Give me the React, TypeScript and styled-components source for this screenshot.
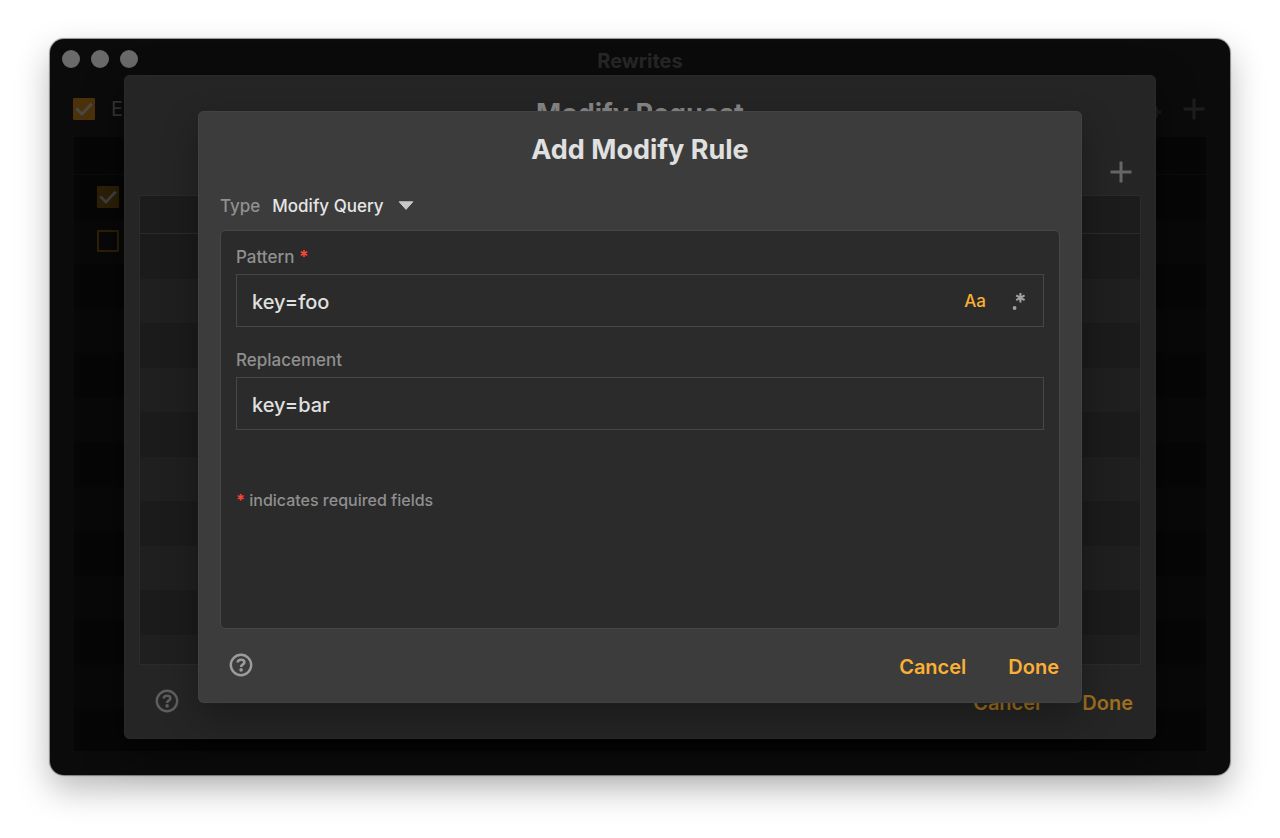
import React, { useState } from "react";
import styled, { createGlobalStyle } from "styled-components";

const GlobalStyle = createGlobalStyle`
  *, *::before, *::after { box-sizing: border-box; }
  html, body, #root { height: 100%; }
  body {
    margin: 0;
    background: #ffffff;
    color: #e0e0e0;
    font-family: Inter, "Liberation Sans", sans-serif;
    font-size: 18px;
  }
  button, input, select { font: inherit; }
`;

const Desktop = styled.div`
  min-height: 100%;
  display: flex;
  padding: 39px 50px 63px;
`;

const Window = styled.div`
  flex: 1;
  display: grid;
  position: relative;
  border-radius: 14px;
  background: #0b0b0b;
  box-shadow: 0 0 1px 1px rgba(0, 0, 0, 0.4), 0 14px 34px rgba(0, 0, 0, 0.28);
`;

const Backdrop = styled.main`
  grid-area: 1 / 1;
  display: flex;
  flex-direction: column;
  padding: 0 24px 24px;
  border-radius: 14px;
  overflow: hidden;
`;

const TitleBar = styled.header`
  display: grid;
  grid-template-columns: 1fr auto 1fr;
  align-items: center;
  height: 44px;
  margin: 0 -12px;
`;

const Lights = styled.div`
  display: flex;
  gap: 11px;
  padding-bottom: 4px;
`;

const Light = styled.span`
  width: 18px;
  height: 18px;
  border-radius: 50%;
  background: #6a6a6a;
`;

const WindowTitle = styled.h1`
  margin: 0;
  font-size: 20px;
  line-height: 24px;
  font-weight: 700;
  color: #272727;
`;

const Toolbar = styled.div`
  display: flex;
  align-items: center;
  gap: 22px;
  height: 54px;
  margin: 0 1px 0 -1px;
  padding-bottom: 3px;
`;

const ToolbarLabel = styled.label`
  display: flex;
  align-items: center;
  gap: 16px;
  margin-right: auto;
  font-size: 20px;
  color: #363636;
`;

const Check = styled.input<{ $tint: string }>`
  appearance: none;
  width: 22px;
  height: 22px;
  margin: 0;
  border: 2px solid ${(p) => p.$tint};
  border-radius: 1px;
  background: transparent;

  &:checked {
    background: ${(p) => p.$tint};
  }
`;

const CheckBox = styled.span`
  display: grid;
  width: 22px;
  height: 22px;

  > * { grid-area: 1 / 1; }
  > svg { z-index: 1; pointer-events: none; }
`;

const IconButton = styled.button<{ $color: string }>`
  display: flex;
  padding: 0;
  border: 0;
  background: none;
  color: ${(p) => p.$color};
  cursor: pointer;
`;

const TargetButton = styled(IconButton)`
  padding-top: 6px;
`;

const RuleList = styled.div`
  flex: 1;
  display: flex;
  flex-direction: column;
  background: #060606;
`;

const ListHead = styled.div<{ $line: string; $height: number }>`
  flex: none;
  height: ${(p) => p.$height}px;
  border-bottom: 1px solid ${(p) => p.$line};
`;

const ListRows = styled.div<{ $a: string; $b: string }>`
  flex: 1;
  background: repeating-linear-gradient(
    ${(p) => p.$a} 0 45px,
    ${(p) => p.$b} 45px 89px
  );
`;

const ListRow = styled.div`
  display: flex;
  align-items: center;
  height: 44px;
  padding-left: 23px;
`;

const Sheet = styled.section<{ $bg: string; $edge: string; $shadow: number }>`
  grid-area: 1 / 1;
  display: grid;
  position: relative;
  margin: 36px 74px;
  border-radius: 6px;
  background: ${(p) => p.$bg};
  box-shadow: inset 0 0 0 1px ${(p) => p.$edge},
    0 14px 36px rgba(0, 0, 0, ${(p) => p.$shadow});
`;

const SheetBody = styled.div<{ $side: number }>`
  grid-area: 1 / 1;
  display: flex;
  flex-direction: column;
  min-width: 0;
  padding: 21px ${(p) => p.$side}px 0;
`;

const SheetTitle = styled.h2<{ $color: string }>`
  margin: 0;
  font-size: 27px;
  line-height: 36px;
  font-weight: 700;
  text-align: center;
  color: ${(p) => p.$color};
`;

const SheetTools = styled.div`
  display: flex;
  align-items: center;
  justify-content: flex-end;
  height: 63px;
  padding: 17px 9px 0;
`;

const RuleTable = styled.div`
  flex: 1;
  display: flex;
  flex-direction: column;
  border: 1px solid #2b2b2b;
  background: #1c1c1c;
`;

const Footer = styled.footer<{ $inset: number }>`
  display: flex;
  align-items: center;
  gap: 42px;
  height: 74px;
  padding: 2px ${(p) => p.$inset}px 0;
`;

const HelpButton = styled(IconButton)`
  margin: 0 auto 4px 8px;
`;

const TextButton = styled.button<{ $color: string }>`
  padding: 0;
  border: 0;
  background: none;
  font-size: 20px;
  line-height: 28px;
  font-weight: 600;
  color: ${(p) => p.$color};
  cursor: pointer;
`;

const TypeRow = styled.div`
  display: flex;
  align-items: center;
  gap: 12px;
  height: 62px;
  padding-top: 14px;
`;

const FieldLabel = styled.label`
  font-size: 17px;
  line-height: 22px;
  font-weight: 500;
  color: #909090;
`;

const SelectWrap = styled.div`
  display: grid;
  align-items: center;

  > * { grid-area: 1 / 1; }
  > svg { justify-self: end; pointer-events: none; }
`;

const Select = styled.select`
  appearance: none;
  padding: 0 30px 0 0;
  border: 0;
  background: none;
  font-size: 17px;
  line-height: 24px;
  font-weight: 500;
  color: #e6e6e6;
`;

const Panel = styled.div`
  flex: 1;
  display: flex;
  flex-direction: column;
  padding: 15px;
  border: 1px solid #474747;
  border-radius: 5px;
  background: #2b2b2b;
`;

const Field = styled.div`
  display: flex;
  flex-direction: column;
  gap: 6px;
  margin-bottom: 22px;
`;

const InputFrame = styled.div`
  display: flex;
  align-items: center;
  gap: 24px;
  height: 53px;
  padding: 0 15px;
  border: 1px solid #474747;
`;

const TextInput = styled.input`
  flex: 1;
  min-width: 0;
  height: 100%;
  padding: 2px 0 0;
  border: 0;
  outline: 0;
  background: none;
  font-size: 20px;
  font-weight: 500;
  color: #e0e0e0;
`;

const CaseButton = styled(TextButton)`
  font-size: 17px;
  font-weight: 500;
`;

const Note = styled.p`
  margin: 37px 0 0;
  font-size: 16px;
  line-height: 22px;
  font-weight: 500;
  color: #909090;
`;

const Star = styled.span`
  font-weight: 700;
  color: #ff4335;
`;

const Plus = () => (
  <svg width="22" height="22" viewBox="0 0 22 22" aria-hidden="true">
    <path d="M11 0.5V21.5M0.5 11H21.5" stroke="currentColor" strokeWidth="3" />
  </svg>
);

const Target = () => (
  <svg width="24" height="24" viewBox="0 0 24 24" fill="none" aria-hidden="true">
    <circle cx="12" cy="12" r="8.5" stroke="currentColor" strokeWidth="2.2" />
    <path d="M19 12H24M0 12H5M12 0V5M12 19V24" stroke="currentColor" strokeWidth="3" />
  </svg>
);

const Tick = ({ color }: { color: string }) => (
  <svg width="22" height="22" viewBox="0 0 22 22" fill="none" aria-hidden="true">
    <path d="M3.2 10.4L9 16L18.6 5.8" stroke={color} strokeWidth="2.8" />
  </svg>
);

const HelpIcon = () => (
  <svg width="24" height="24" viewBox="0 0 24 24" fill="none" aria-hidden="true">
    <circle cx="12" cy="12" r="10.2" stroke="currentColor" strokeWidth="2.4" />
    <path
      d="M8.7 9.5C8.8 7.7 10.2 6.8 12.1 6.8C14 6.8 15.4 7.8 15.4 9.3C15.4 11.4 12.1 11.5 12.1 14"
      stroke="currentColor"
      strokeWidth="2.6"
    />
    <circle cx="12.1" cy="16.9" r="1.8" fill="currentColor" />
  </svg>
);

const RegexIcon = () => (
  <svg width="18" height="22" viewBox="0 0 18 22" fill="none" aria-hidden="true">
    <path
      d="M10.4 3V12.6M6.2 5.4L14.6 10.2M14.6 5.4L6.2 10.2"
      stroke="currentColor"
      strokeWidth="2.1"
    />
    <circle cx="4.6" cy="18" r="1.9" fill="currentColor" />
  </svg>
);

const Caret = () => (
  <svg width="16" height="10" viewBox="0 0 16 10" aria-hidden="true">
    <path
      d="M1.2 0.8H14.8L8 8.4Z"
      fill="#c8c8c8"
      stroke="#c8c8c8"
      strokeWidth="1"
      strokeLinejoin="round"
    />
  </svg>
);

function AddRuleSheet() {
  const [pattern, setPattern] = useState("key=foo");
  const [replacement, setReplacement] = useState("key=bar");
  return (
    <Sheet $bg="#3c3c3c" $edge="#424242" $shadow={0.3} role="dialog" aria-labelledby="add-title">
      <SheetBody $side={22}>
        <SheetTitle id="add-title" $color="#e0e0e0">Add Modify Rule</SheetTitle>
        <TypeRow>
          <FieldLabel htmlFor="type">Type</FieldLabel>
          <SelectWrap>
            <Select id="type" defaultValue="query">
              <option value="query">Modify Query</option>
            </Select>
            <Caret />
          </SelectWrap>
        </TypeRow>
        <Panel>
          <Field>
            <FieldLabel htmlFor="pattern">
              Pattern <Star>*</Star>
            </FieldLabel>
            <InputFrame>
              <TextInput id="pattern" value={pattern} onChange={(e) => setPattern(e.target.value)} />
              <CaseButton type="button" $color="#fbb034" aria-label="Aa, match case">Aa</CaseButton>
              <IconButton type="button" $color="#a2a2a2" aria-label="Regular expression">
                <RegexIcon />
              </IconButton>
            </InputFrame>
          </Field>
          <Field>
            <FieldLabel htmlFor="replacement">Replacement</FieldLabel>
            <InputFrame>
              <TextInput
                id="replacement"
                value={replacement}
                onChange={(e) => setReplacement(e.target.value)}
              />
            </InputFrame>
          </Field>
          <Note>
            <Star>*</Star> indicates required fields
          </Note>
        </Panel>
        <Footer $inset={1}>
          <HelpButton type="button" $color="#9c9c9c" aria-label="Help">
            <HelpIcon />
          </HelpButton>
          <TextButton type="button" $color="#fbb034">Cancel</TextButton>
          <TextButton type="button" $color="#fbb034">Done</TextButton>
        </Footer>
      </SheetBody>
    </Sheet>
  );
}

function RequestSheet() {
  return (
    <Sheet $bg="#252525" $edge="#292929" $shadow={0.5}>
      <SheetBody $side={15}>
        <SheetTitle $color="#868686">Modify Request</SheetTitle>
        <SheetTools>
          <IconButton type="button" $color="#666666" aria-label="Add rule">
            <Plus />
          </IconButton>
        </SheetTools>
        <RuleTable>
          <ListHead $height={38} $line="#2b2b2b" />
          <ListRows $a="#1b1b1b" $b="#1f1f1f" />
        </RuleTable>
        <Footer $inset={8}>
          <HelpButton type="button" $color="#5e5e5e" aria-label="Help">
            <HelpIcon />
          </HelpButton>
          <TextButton type="button" $color="#9f6f1f">Cancel</TextButton>
          <TextButton type="button" $color="#9f6f1f">Done</TextButton>
        </Footer>
      </SheetBody>
      <AddRuleSheet />
    </Sheet>
  );
}

export default function App() {
  return (
    <>
      <GlobalStyle />
      <Desktop>
        <Window>
          <Backdrop>
            <TitleBar>
              <Lights>
                <Light />
                <Light />
                <Light />
              </Lights>
              <WindowTitle>Rewrites</WindowTitle>
            </TitleBar>
            <Toolbar>
              <ToolbarLabel>
                <CheckBox>
                  <Check $tint="#4c320b" type="checkbox" defaultChecked />
                  <Tick color="#484848" />
                </CheckBox>
                Enable
              </ToolbarLabel>
              <TargetButton type="button" $color="#1c1c1c" aria-label="Locate">
                <Target />
              </TargetButton>
              <IconButton type="button" $color="#1e1e1e" aria-label="Add rewrite">
                <Plus />
              </IconButton>
            </Toolbar>
            <RuleList>
              <ListHead $height={38} $line="#0c0c0c" />
              <ListRows $a="#060606" $b="#080808">
                <ListRow>
                  <CheckBox>
                    <Check $tint="#2e2007" type="checkbox" defaultChecked aria-label="First rewrite" />
                    <Tick color="#3a3a3a" />
                  </CheckBox>
                </ListRow>
                <ListRow>
                  <CheckBox>
                    <Check $tint="#2e2007" type="checkbox" aria-label="Second rewrite" />
                  </CheckBox>
                </ListRow>
              </ListRows>
            </RuleList>
          </Backdrop>
          <RequestSheet />
        </Window>
      </Desktop>
    </>
  );
}
